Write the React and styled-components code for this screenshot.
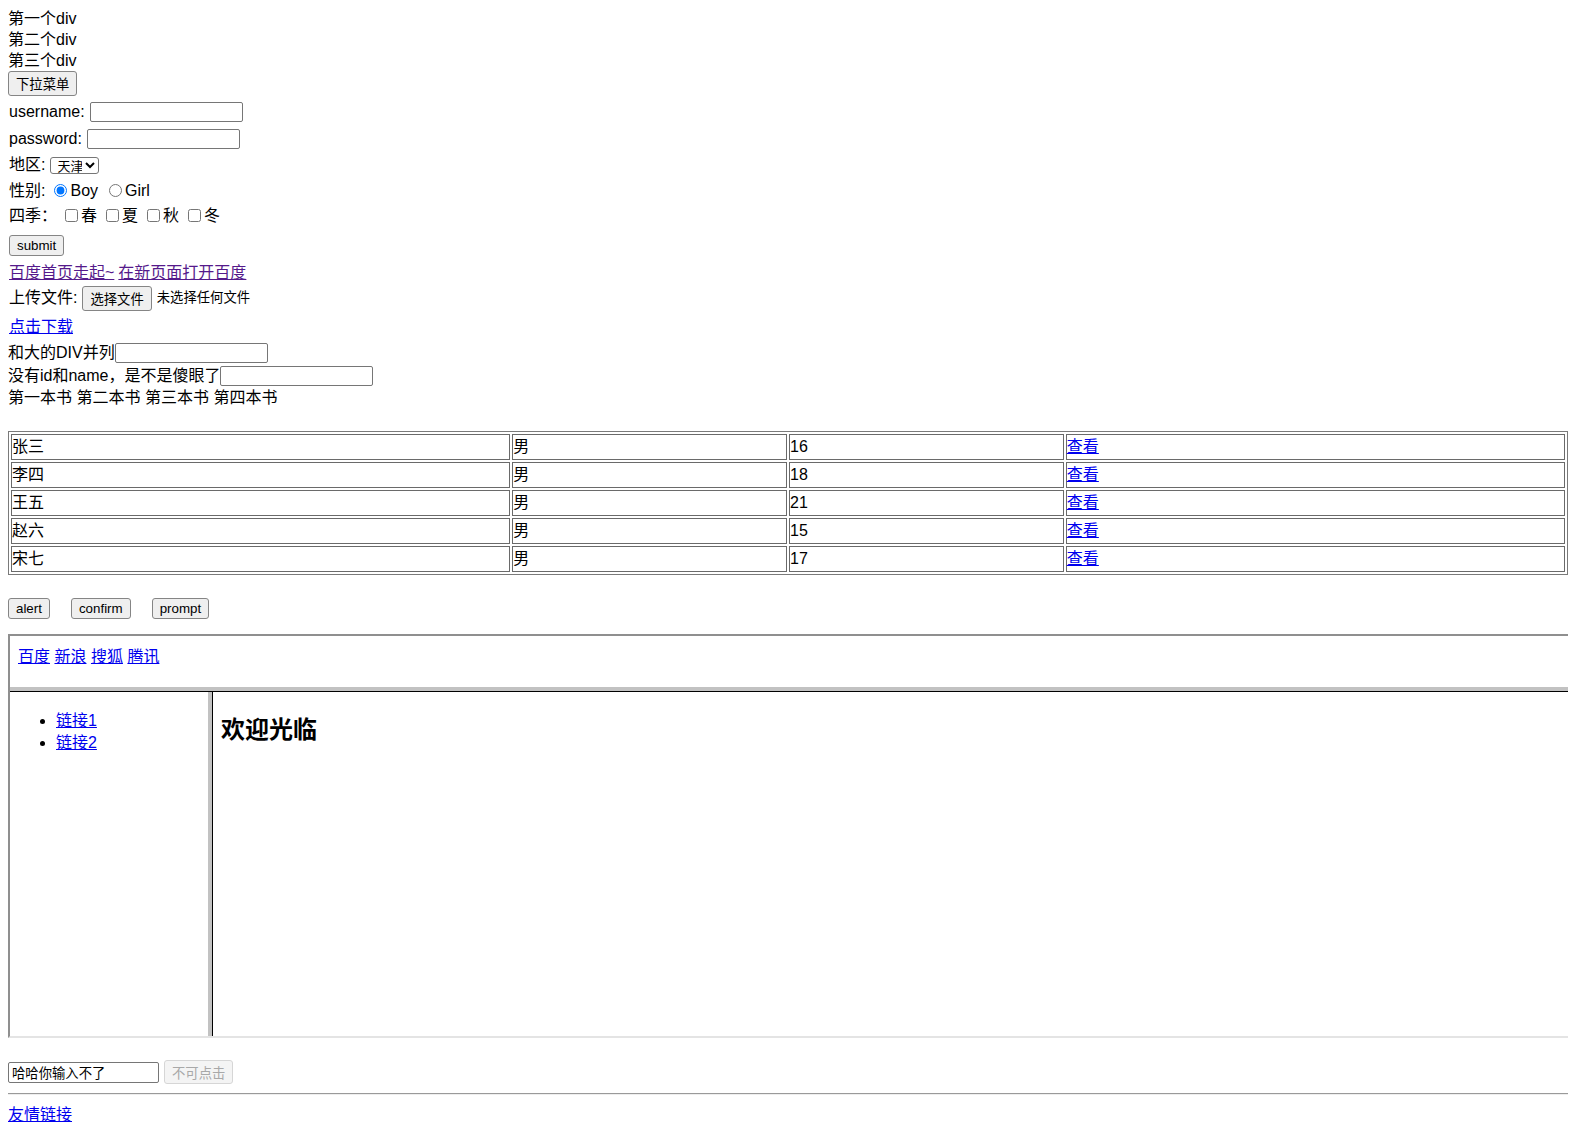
import React from "react";
import styled, { createGlobalStyle } from "styled-components";

const GlobalStyle = createGlobalStyle`
  body {
    margin: 8px;
    font-family: "Liberation Sans", "Noto Sans CJK SC", sans-serif;
    font-size: 16px;
    line-height: 22px;
    color: #000;
    background: #fff;
  }
`;

const FONT = `"Liberation Sans", "Noto Sans CJK SC", sans-serif`;

const TextLine = styled.div`
  line-height: ${(p) => p.$h || 22}px;
  height: ${(p) => p.$h || 22}px;
`;

const Button = styled.button`
  box-sizing: border-box;
  height: ${(p) => (p.$tall ? 25 : 21)}px;
  padding: 0 7px;
  font-family: ${FONT};
  font-size: 13.33px;
  line-height: normal;
  color: #000;
  background: #efefef;
  border: 1px solid #858585;
  border-radius: 3px;
  white-space: nowrap;

  &:disabled {
    color: #a8a8a8;
    background: #f4f4f4;
    border-color: #d6d6d6;
  }
`;

const TextInput = styled.input`
  box-sizing: border-box;
  width: ${(p) => p.$w || 153}px;
  height: ${(p) => p.$h || 20}px;
  margin: 0;
  padding: 1px 3px;
  font-family: ${FONT};
  font-size: 13.33px;
  color: #000;
  background: #fff;
  border: 1px solid #767676;
  border-radius: 2px;
`;

const Select = styled.select`
  box-sizing: border-box;
  width: 49px;
  height: 17px;
  margin: 0;
  padding: 0 0 0 2px;
  font-family: ${FONT};
  font-size: 13px;
  color: #000;
  background: #fff;
  border: 1px solid #767676;
  border-radius: 3px;
`;

const Check = styled.input`
  width: 13px;
  height: 13px;
  margin: 0 3px 0 ${(p) => p.$ml ?? 9}px;
  flex: none;
`;

const Link = styled.a`
  color: ${(p) => (p.$visited ? "#551a8b" : "#0000ee")};
  text-decoration: underline;
  cursor: pointer;
`;

const Form = styled.form`
  display: flex;
  flex-direction: column;
  padding: 2px 0 0 1px;
`;

const Row = styled.div`
  display: flex;
  align-items: center;
  height: ${(p) => p.$h}px;
  gap: ${(p) => p.$gap || 0}px;
  white-space: nowrap;
`;

const Label = styled.span`
  margin-right: ${(p) => p.$mr || 0}px;
`;

const FileHint = styled.span`
  margin-left: 5px;
  font-size: 13.33px;
`;

const InlineRow = styled.div`
  display: flex;
  align-items: center;
  height: 23px;
`;

const Table = styled.table`
  width: 100%;
  margin-top: 22px;
  table-layout: fixed;
  border-collapse: separate;
  border-spacing: 2px;
  border: 1px solid #7a7a7a;
`;

const Cell = styled.td`
  width: ${(p) => p.$w};
  padding: 1px 1px 1px 0;
  height: 22px;
  line-height: 22px;
  border: 1px solid #6a6a6a;
  vertical-align: middle;
`;

const ButtonBar = styled.div`
  display: flex;
  gap: 21px;
  margin-top: 23px;
`;

const Frameset = styled.div`
  width: 100%;
  height: 400px;
  margin-top: 15px;
  border-style: solid;
  border-width: 2px;
  border-color: #8f8f8f #e4e4e4 #e4e4e4 #8f8f8f;
  display: grid;
  grid-template-rows: 51px 4px 1fr;
`;

const TopFrame = styled.div`
  padding: 10px 8px 8px;
  line-height: 22px;
`;

const FrameBar = styled.div`
  background: #c2c2c2;
`;

const Lower = styled.div`
  display: grid;
  grid-template-columns: 198px 4px 1fr;
  border-top: 1px solid #000;
  min-height: 0;
`;

const LeftFrame = styled.div`
  padding: 0 8px;
`;

const List = styled.ul`
  margin: 18px 0;
  padding-left: 38px;
  line-height: 22px;
`;

const RightFrame = styled.div`
  border-left: 1px solid #000;
  padding: 0 8px;
`;

const Welcome = styled.h2`
  margin: 21px 0;
  font-size: 24px;
  line-height: 33px;
  font-weight: bold;
`;

const BottomRow = styled.div`
  display: flex;
  align-items: center;
  gap: 5px;
  height: 24px;
  margin-top: 22px;
`;

const Rule = styled.hr`
  margin: 9px 0 9px;
  border: none;
  border-top: 1px solid #9a9a9a;
  border-bottom: 1px solid #eeeeee;
`;

const people = [
  ["张三", "男", 16],
  ["李四", "男", 18],
  ["王五", "男", 21],
  ["赵六", "男", 15],
  ["宋七", "男", 17],
];

const App = () => {
  return (
    <>
      <GlobalStyle />
      <TextLine $h={21}>第一个div</TextLine>
      <TextLine $h={21}>第二个div</TextLine>
      <TextLine $h={21}>第三个div</TextLine>
      <Button $tall type="button">下拉菜单</Button>

      <Form onSubmit={(e) => e.preventDefault()}>
        <Row $h={27}>
          <Label $mr={5}>username:</Label>
          <TextInput type="text" name="username" />
        </Row>
        <Row $h={27}>
          <Label $mr={5}>password:</Label>
          <TextInput type="password" name="password" />
        </Row>
        <Row $h={26}>
          <Label $mr={5}>地区:</Label>
          <Select defaultValue="tj">
            <option value="bj">北京</option>
            <option value="tj">天津</option>
            <option value="sh">上海</option>
          </Select>
        </Row>
        <Row $h={25}>
          <Label>性别:</Label>
          <Check type="radio" name="sex" defaultChecked />
          Boy
          <Check type="radio" name="sex" $ml={11} />
          Girl
        </Row>
        <Row $h={25}>
          <Label>四季：</Label>
          <Check type="checkbox" $ml={8} />春
          <Check type="checkbox" />夏
          <Check type="checkbox" />秋
          <Check type="checkbox" />冬
        </Row>
        <Row $h={34}>
          <Button type="submit">submit</Button>
        </Row>
        <Row $h={21} $gap={4}>
          <Link $visited href="#">百度首页走起~</Link>
          <Link $visited href="#">在新页面打开百度</Link>
        </Row>
        <Row $h={30}>
          <Label $mr={5}>上传文件:</Label>
          <Button $tall type="button">选择文件</Button>
          <FileHint>未选择任何文件</FileHint>
        </Row>
        <Row $h={28}>
          <Link href="#">点击下载</Link>
        </Row>
      </Form>

      <InlineRow>
        和大的DIV并列
        <TextInput type="text" />
      </InlineRow>
      <InlineRow>
        没有id和name，是不是傻眼了
        <TextInput type="text" />
      </InlineRow>
      <TextLine>
        <span>第一本书</span> <span>第二本书</span> <span>第三本书</span>{" "}
        <span>第四本书</span>
      </TextLine>

      <Table>
        <tbody>
          {people.map(([name, sex, age]) => (
            <tr key={name}>
              <Cell $w="32.3%">{name}</Cell>
              <Cell $w="17.7%">{sex}</Cell>
              <Cell $w="17.7%">{age}</Cell>
              <Cell $w="32.3%">
                <Link href="#">查看</Link>
              </Cell>
            </tr>
          ))}
        </tbody>
      </Table>

      <ButtonBar>
        <Button type="button">alert</Button>
        <Button type="button">confirm</Button>
        <Button type="button">prompt</Button>
      </ButtonBar>

      <Frameset>
        <TopFrame>
          <Link href="#">百度</Link> <Link href="#">新浪</Link>{" "}
          <Link href="#">搜狐</Link> <Link href="#">腾讯</Link>
        </TopFrame>
        <FrameBar />
        <Lower>
          <LeftFrame>
            <List>
              <li>
                <Link href="#">链接1</Link>
              </li>
              <li>
                <Link href="#">链接2</Link>
              </li>
            </List>
          </LeftFrame>
          <FrameBar />
          <RightFrame>
            <Welcome>欢迎光临</Welcome>
          </RightFrame>
        </Lower>
      </Frameset>

      <BottomRow>
        <TextInput $w={151} $h={21} type="text" readOnly value="哈哈你输入不了" />
        <Button $tall disabled type="button" style={{ height: 24 }}>
          不可点击
        </Button>
      </BottomRow>
      <Rule />
      <TextLine>
        <Link href="#">友情链接</Link>
      </TextLine>
    </>
  );
};

export default App;
